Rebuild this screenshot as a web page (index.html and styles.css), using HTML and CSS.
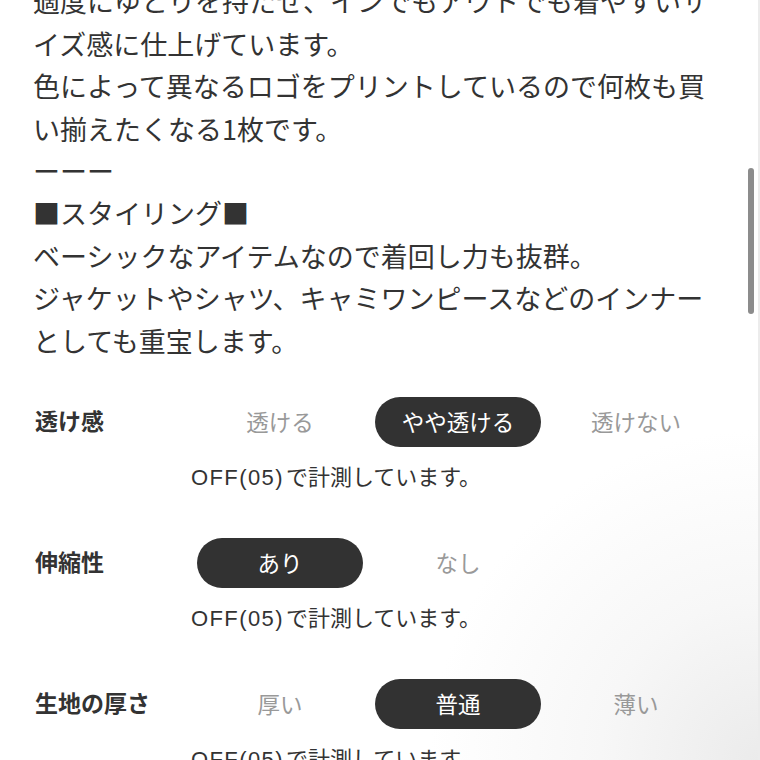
FILE: index.html
```html
<!DOCTYPE html>
<html lang="ja">

<head>
	<meta charset="UTF-8">
	<meta name="viewport" content="width=device-width, initial-scale=1.0">
	<title>商品詳細</title>
	<link rel="stylesheet" href="styles.css">
</head>

<body>
	<div class="page">
		<p class="description">適度にゆとりを持たせ、インでもアウトでも着やすいサイズ感に仕上げています。<br>色によって異なるロゴをプリントしているので何枚も買い揃えたくなる1枚です。<br>ーーー<br>■スタイリング■<br>ベーシックなアイテムなので着回し力も抜群。<br>ジャケットやシャツ、キャミワンピースなどのインナーとしても重宝します。</p>

		<div class="specs">
			<div class="spec">
				<div class="spec-label">透け感</div>
				<div class="spec-options">
					<span class="option">透ける</span>
					<span class="option selected">やや透ける</span>
					<span class="option">透けない</span>
				</div>
				<div class="spec-note"><span class="size">OFF(05)</span>で計測しています。</div>
			</div>
			<div class="spec">
				<div class="spec-label">伸縮性</div>
				<div class="spec-options">
					<span class="option selected">あり</span>
					<span class="option">なし</span>
				</div>
				<div class="spec-note"><span class="size">OFF(05)</span>で計測しています。</div>
			</div>
			<div class="spec">
				<div class="spec-label">生地の厚さ</div>
				<div class="spec-options">
					<span class="option">厚い</span>
					<span class="option selected">普通</span>
					<span class="option">薄い</span>
				</div>
				<div class="spec-note"><span class="size">OFF(05)</span>で計測しています。</div>
			</div>
		</div>
	</div>

	<div class="scrollbar"></div>
</body>

</html>
```

FILE: styles.css
```css
* {
	margin: 0;
	padding: 0;
	box-sizing: border-box;
}

html,
body {
	height: 100%;
	overflow: hidden;
}

body {
	font-family: "Noto Sans CJK JP", "Noto Sans", sans-serif;
	color: #333;
	background: radial-gradient(circle at 100% 100%, #ebebeb 0, #f7f7f7 160px, #fff 330px);
	border-right: 2px solid #ececec;
}

.page {
	padding: 0 0 0 33px;
}

.description {
	width: 690px;
	margin-top: -19.6px;
	font-size: 27px;
	line-height: 42.4px;
}

.specs {
	margin-top: 35px;
	padding-left: 2px;
}

.spec {
	display: grid;
	grid-template-columns: 162px 1fr;
	margin-bottom: 45px;
}

.spec-label {
	display: flex;
	align-items: center;
	height: 50px;
	padding-bottom: 4px;
	font-size: 23px;
	font-weight: bold;
}

.spec-options {
	display: grid;
	grid-template-columns: repeat(3, 166px);
	gap: 12px;
}

.option {
	display: flex;
	align-items: center;
	justify-content: center;
	height: 50px;
	padding-bottom: 3px;
	border-radius: 25px;
	font-size: 22.5px;
	color: #999;
}

.option.selected {
	background: #323232;
	color: #fff;
}

.spec-note {
	grid-column: 2;
	margin: 13px 0 0 -6px;
	font-size: 22px;
	line-height: 30px;
}

.spec-note .size {
	font-family: "Liberation Sans", sans-serif;
	letter-spacing: 1.4px;
	margin-right: 2px;
}

.scrollbar {
	position: absolute;
	top: 168px;
	left: 748px;
	width: 6px;
	height: 146px;
	border-radius: 3px;
	background: #8c8c8c;
}
```
